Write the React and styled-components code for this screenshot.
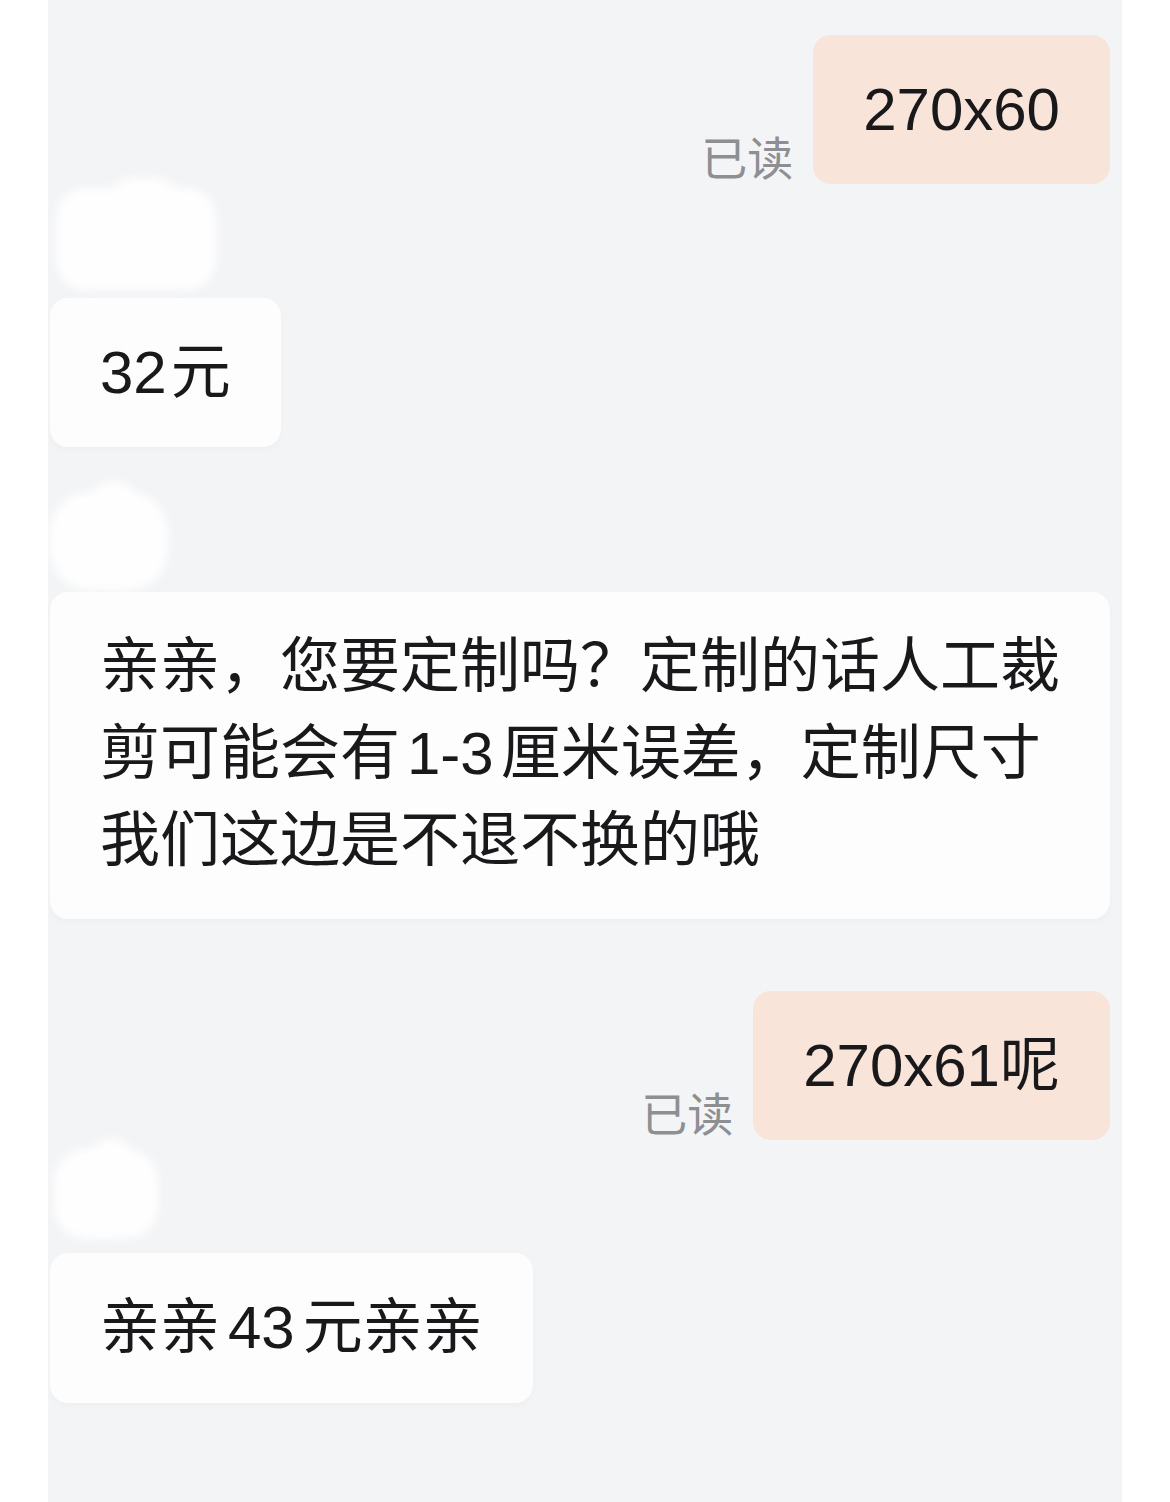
import styled, { createGlobalStyle } from 'styled-components';

const GlobalStyle = createGlobalStyle`
  html, body {
    margin: 0;
    padding: 0;
    background: #ffffff;
  }
  body {
    font-family: 'Liberation Sans', 'Noto Sans CJK SC', sans-serif;
  }
`;

const Page = styled.div`
  min-height: 1502px;
  background: #ffffff;
`;

const Panel = styled.main`
  width: 1074px;
  min-height: 1502px;
  margin-left: 48px;
  box-sizing: border-box;
  padding: 35px 12px 0 2px;
  background: #f3f4f6;
  display: flex;
  flex-direction: column;
`;

const OutRow = styled.div`
  display: flex;
  justify-content: flex-end;
  align-items: flex-end;
  gap: 20px;
  margin-top: ${(p) => p.$top || 0}px;
`;

const ReadMark = styled.span`
  font-family: 'Noto Sans CJK SC', sans-serif;
  font-size: 46px;
  line-height: 1;
  color: #8d8f93;
  margin-bottom: 6px;
`;

const Bubble = styled.div`
  box-sizing: border-box;
  padding: ${(p) => p.$pad || '31px 50px'};
  border-radius: 18px;
  background: ${(p) => (p.$out ? '#f9e4da' : '#fdfdfd')};
  box-shadow: ${(p) => (p.$out ? 'none' : '0 3px 6px rgba(0, 0, 0, 0.025)')};
  color: #19191b;
  font-size: 60px;
  line-height: 87px;
  max-width: 1060px;
  margin-top: ${(p) => p.$top || 0}px;
  align-self: ${(p) => (p.$out ? 'auto' : 'flex-start')};
`;

const Num = styled.span`
  margin: 0 ${(p) => p.$r ?? 8}px 0 ${(p) => p.$l ?? 8}px;
`;

const Sender = styled.div`
  position: relative;
  width: ${(p) => p.$w}px;
  height: ${(p) => p.$h}px;
  margin-top: ${(p) => p.$top || 0}px;
  margin-left: ${(p) => p.$left || 0}px;
  border-radius: ${(p) => p.$r || 28}px;
  background: #fefefe;
  filter: blur(5px);

  &::after {
    content: '';
    position: absolute;
    left: ${(p) => p.$w * 0.35}px;
    top: -10px;
    width: ${(p) => p.$w * 0.4}px;
    height: 40px;
    border-radius: 20px;
    background: #fefefe;
  }
`;

export default function App() {
  return (
    <Page>
      <GlobalStyle />
      <Panel>
        <OutRow>
          <ReadMark>已读</ReadMark>
          <Bubble $out>270x60</Bubble>
        </OutRow>

        <Sender $w={160} $h={102} $top={4} $left={6} $r={30} />
        <Bubble $top={8}>
          <Num $l={0} $r={4}>32</Num>元
        </Bubble>

        <Sender $w={118} $h={98} $top={45} $r={40} />
        <Bubble $top={2} $pad="31px 50px 35px">
          亲亲，您要定制吗？定制的话人工裁
          <br />
          剪可能会有<Num $l={7} $r={7}>1-3</Num>厘米误差，定制尺寸
          <br />
          我们这边是不退不换的哦
        </Bubble>

        <OutRow $top={72}>
          <ReadMark>已读</ReadMark>
          <Bubble $out>270x61呢</Bubble>
        </OutRow>

        <Sender $w={104} $h={90} $top={9} $left={4} $r={32} />
        <Bubble $top={14} $pad="31px 50px 32px">
          亲亲<Num>43</Num>元亲亲
        </Bubble>
      </Panel>
    </Page>
  );
}
